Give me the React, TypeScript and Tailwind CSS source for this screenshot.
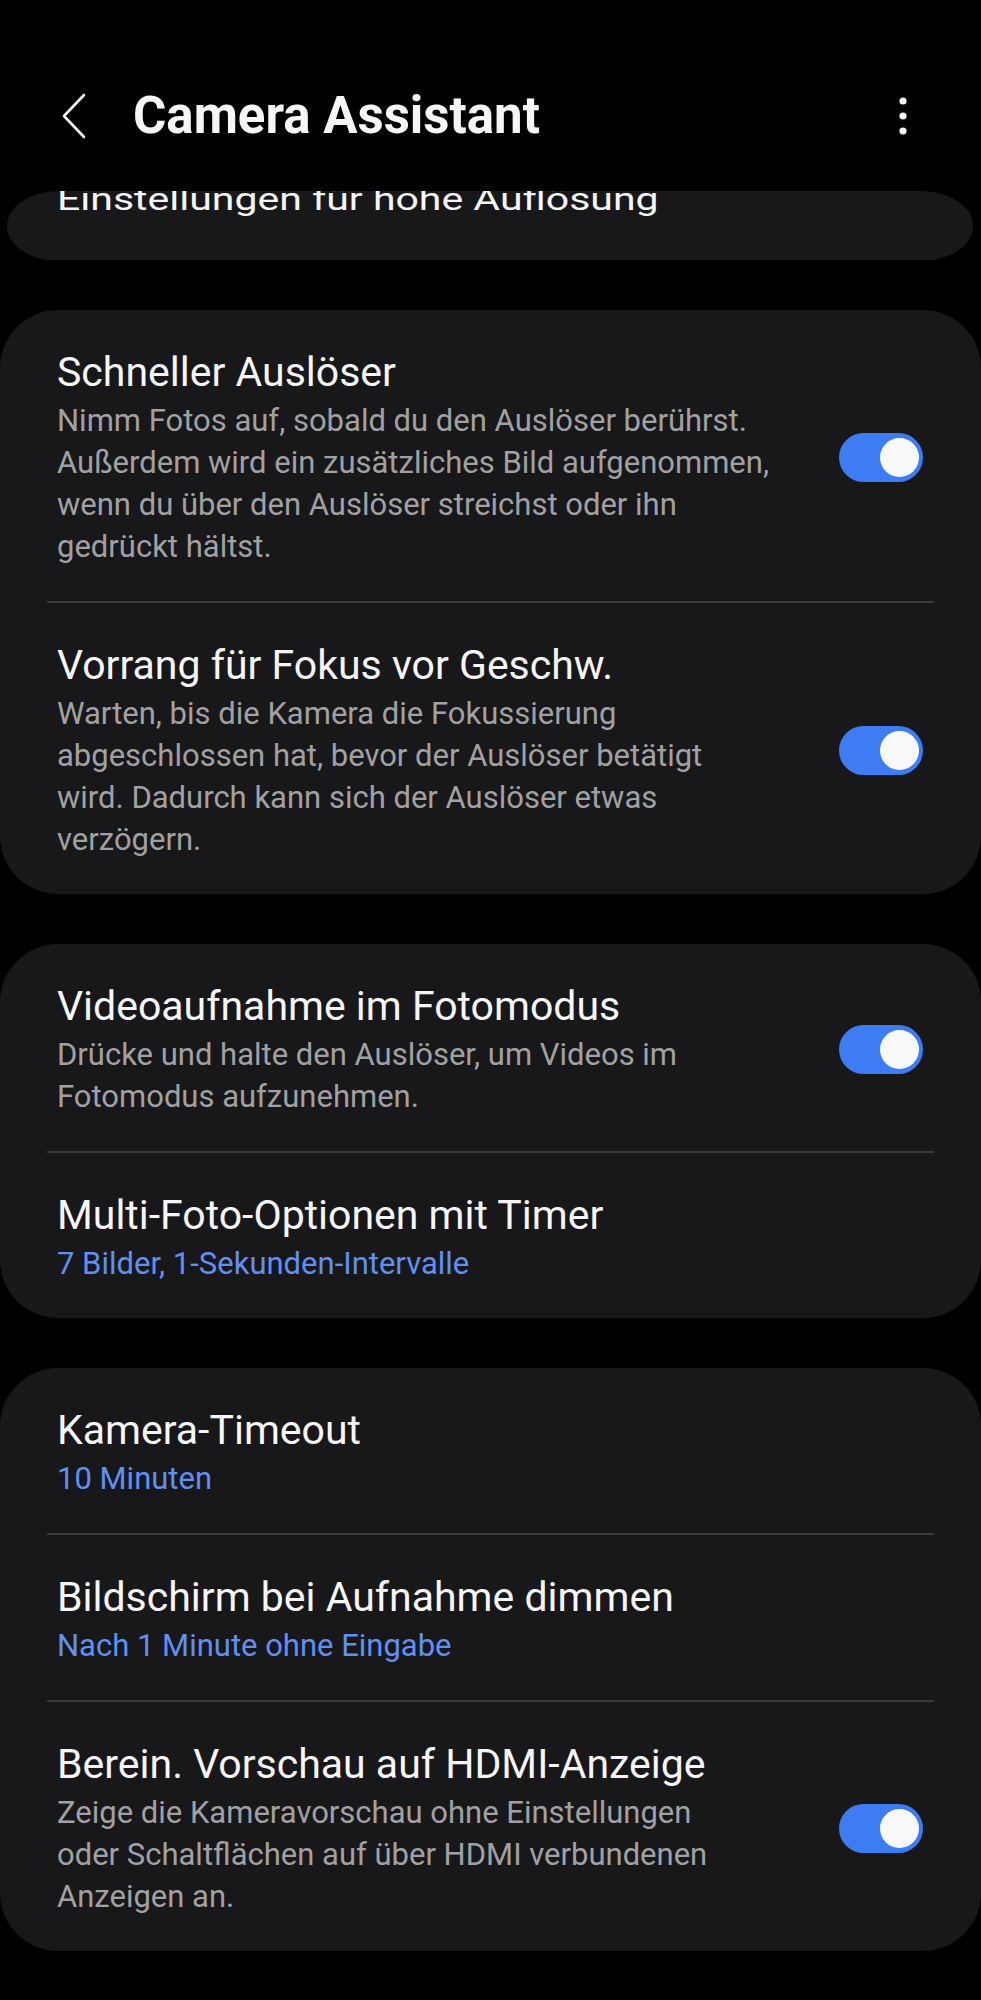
import React from 'react';

type Row = {
  title: string;
  lines?: string[];
  sub?: string;
  toggle?: boolean;
};

const cards: Row[][] = [
  [
    {
      title: 'Schneller Auslöser',
      lines: [
        'Nimm Fotos auf, sobald du den Auslöser berührst.',
        'Außerdem wird ein zusätzliches Bild aufgenommen,',
        'wenn du über den Auslöser streichst oder ihn',
        'gedrückt hältst.',
      ],
      toggle: true,
    },
    {
      title: 'Vorrang für Fokus vor Geschw.',
      lines: [
        'Warten, bis die Kamera die Fokussierung',
        'abgeschlossen hat, bevor der Auslöser betätigt',
        'wird. Dadurch kann sich der Auslöser etwas',
        'verzögern.',
      ],
      toggle: true,
    },
  ],
  [
    {
      title: 'Videoaufnahme im Fotomodus',
      lines: ['Drücke und halte den Auslöser, um Videos im', 'Fotomodus aufzunehmen.'],
      toggle: true,
    },
    { title: 'Multi-Foto-Optionen mit Timer', sub: '7 Bilder, 1-Sekunden-Intervalle' },
  ],
  [
    { title: 'Kamera-Timeout', sub: '10 Minuten' },
    { title: 'Bildschirm bei Aufnahme dimmen', sub: 'Nach 1 Minute ohne Eingabe' },
    {
      title: 'Berein. Vorschau auf HDMI-Anzeige',
      lines: [
        'Zeige die Kameravorschau ohne Einstellungen',
        'oder Schaltflächen auf über HDMI verbundenen',
        'Anzeigen an.',
      ],
      toggle: true,
    },
  ],
];

const Toggle: React.FC = () => (
  <div className="w-[84px] h-[49px] shrink-0 rounded-full bg-[#3d7cf3] flex items-center justify-end pr-[4px]">
    <div className="w-[39px] h-[39px] rounded-full bg-[#f9f9fb]" />
  </div>
);

const SettingRow: React.FC<{ row: Row }> = ({ row }) => (
  <div className="flex items-center pl-[57px] pr-[58px] pt-[37px] pb-[33px]">
    <div className="flex-1 min-w-0">
      <div className="text-[41px] leading-[50px] text-[#f6f6f8] whitespace-nowrap">{row.title}</div>
      {row.lines && (
        <div className="mt-[3px] text-[31px] leading-[42px] text-[#a1a1a4] whitespace-nowrap">
          {row.lines.map((l) => (
            <div key={l}>{l}</div>
          ))}
        </div>
      )}
      {row.sub && (
        <div className="mt-[3px] text-[31px] leading-[42px] text-[#5f90f2] whitespace-nowrap">{row.sub}</div>
      )}
    </div>
    {row.toggle && <Toggle />}
  </div>
);

const App: React.FC = () => {
  return (
    <div className="w-[981px] min-h-[2000px] bg-black font-['Roboto',sans-serif] overflow-hidden">
      {/* Top bar */}
      <header className="h-[191px] flex items-start pt-[86px] pl-[61px] pr-[74px]">
        <div className="h-[60px] flex items-center w-full">
          <svg width="26" height="46" viewBox="0 0 26 46" fill="none">
            <path d="M23 2 L3 23 L23 44" stroke="#f4f4f6" strokeWidth="2.6" strokeLinecap="round" strokeLinejoin="round" />
          </svg>
          <h1 className="ml-[46px] text-[51px] leading-[60px] font-bold text-[#f6f6f8]">Camera Assistant</h1>
          <svg className="ml-auto" width="8" height="38" viewBox="0 0 8 38">
            <circle cx="4" cy="4" r="3.6" fill="#f4f4f6" />
            <circle cx="4" cy="19" r="3.6" fill="#f4f4f6" />
            <circle cx="4" cy="34" r="3.6" fill="#f4f4f6" />
          </svg>
        </div>
      </header>

      <div className="flex flex-col gap-[50px]">
        {/* Partially scrolled-away card */}
        <div className="h-[69px] overflow-hidden">
          <div className="ml-[7px] mr-[8px] h-[70px] bg-[#18181a] rounded-[52px_/_35px] pl-[50px] flex items-start">
            <div className="-mt-[23px] text-[41px] leading-[50px] text-[#f6f6f8] whitespace-nowrap scale-y-75 origin-bottom">
              Einstellungen für hohe Auflösung
            </div>
          </div>
        </div>

        {cards.map((card, ci) => (
          <div key={ci} className="bg-[#18181a] rounded-[58px]">
            {card.map((row, ri) => (
              <React.Fragment key={row.title}>
                {ri > 0 && <div className="mx-[47px] h-[2px] bg-[#3a3a3d]" />}
                <SettingRow row={row} />
              </React.Fragment>
            ))}
          </div>
        ))}
      </div>
    </div>
  );
};

export default App;
